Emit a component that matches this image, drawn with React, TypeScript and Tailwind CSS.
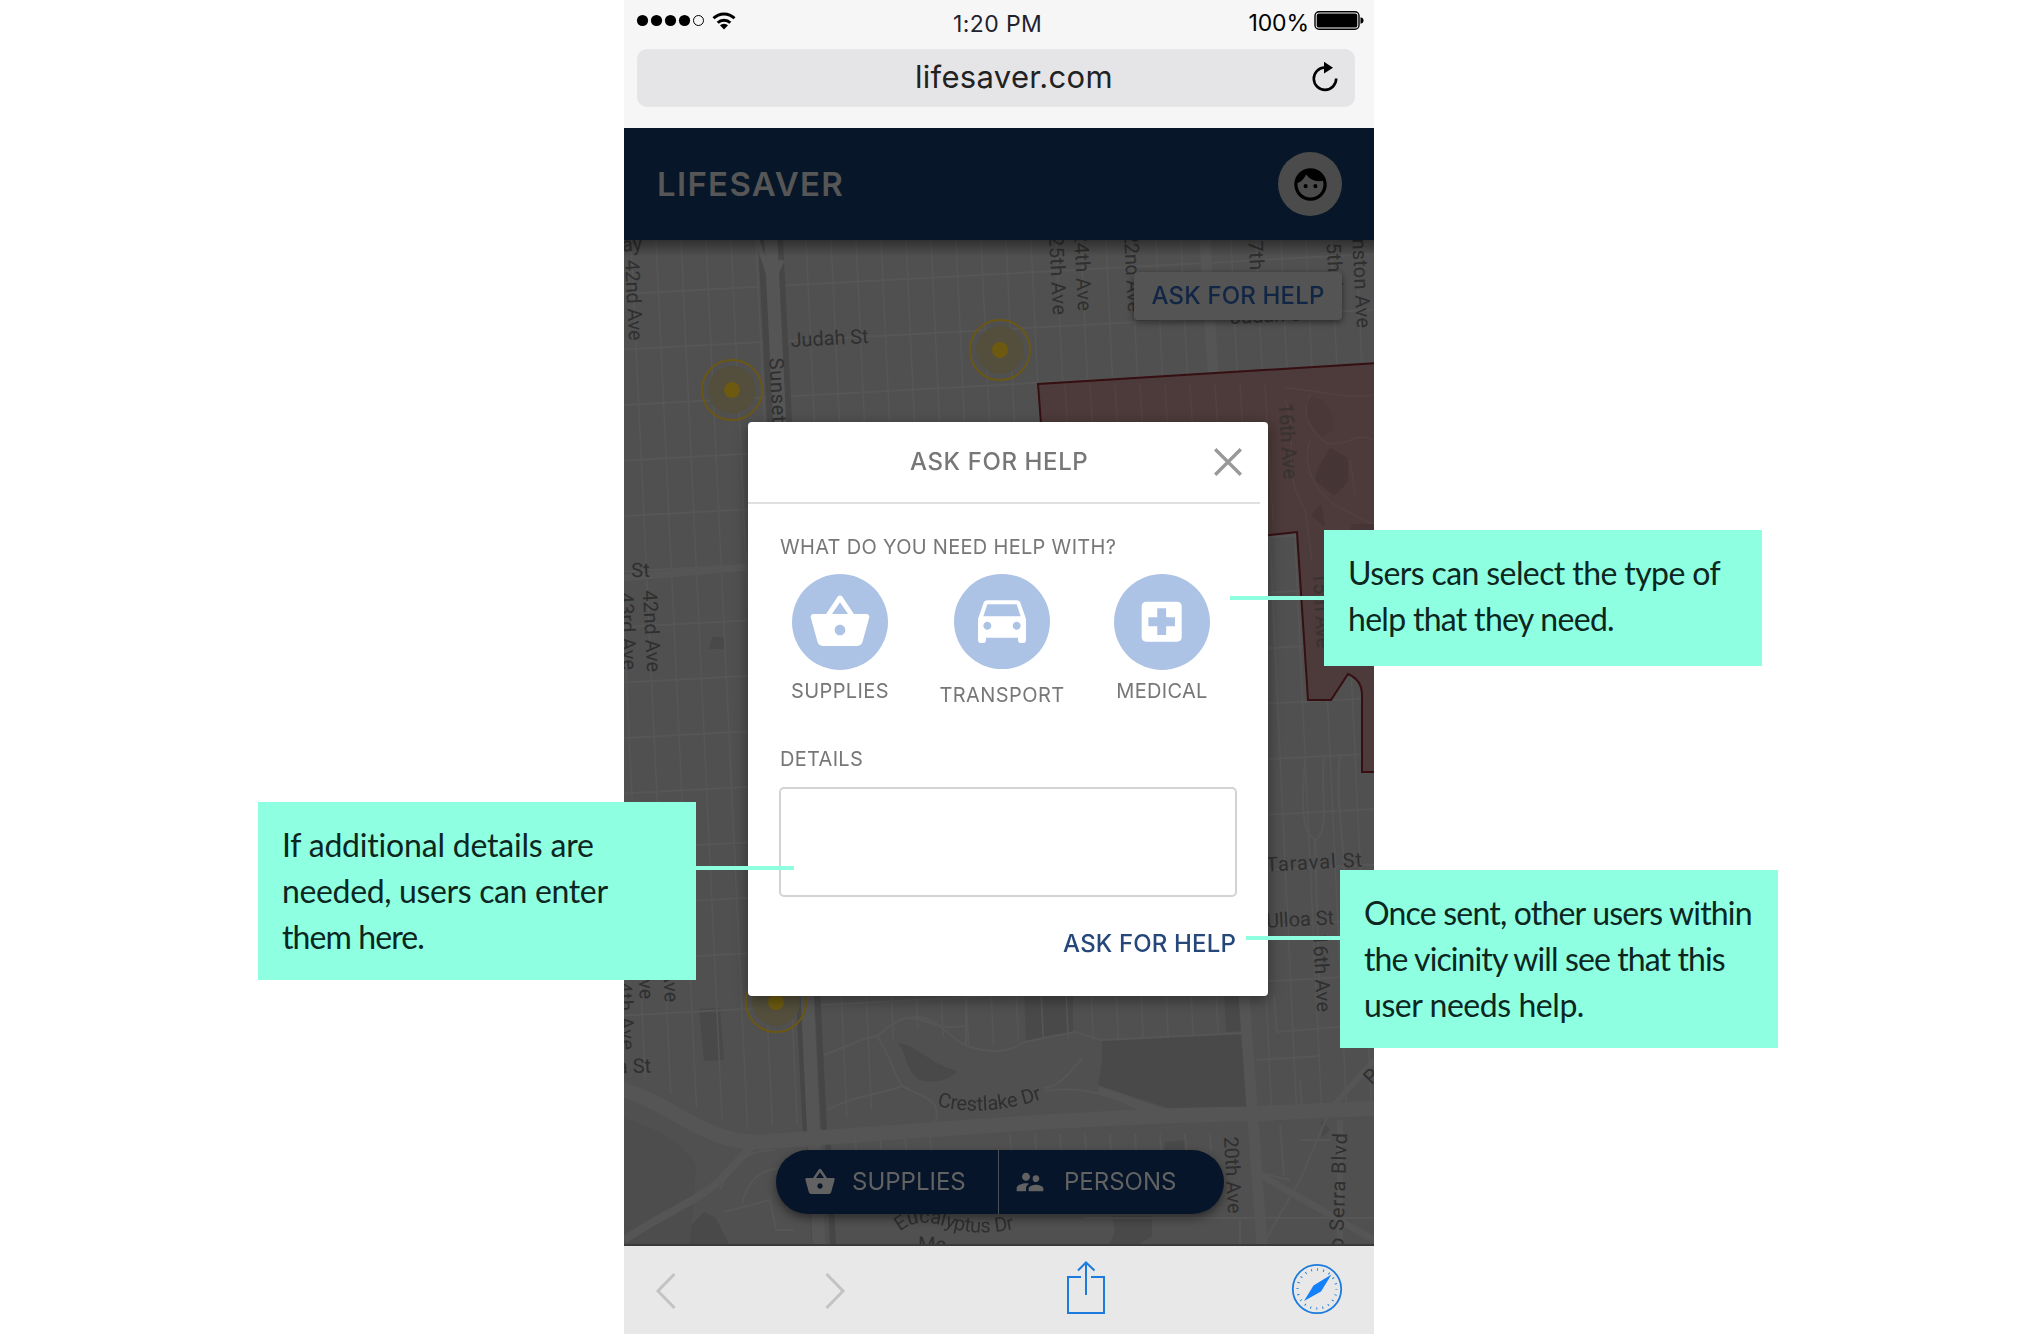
import React from "react";
import {
  MdDirectionsCar,
  MdFace,
  MdLocalHospital,
  MdShoppingBasket,
  MdSupervisorAccount,
} from "react-icons/md";

const avenues = Array.from({ length: 31 }, (_, i) => 606 + i * 25);
const streets = Array.from({ length: 14 }, (_, i) => 294 + i * 55.5);

type LabelProps = { x: number; y: number; r: number; len?: number; size?: number; children: string };

function Label({ x, y, r, len, size = 20, children }: LabelProps) {
  return (
    <text
      x={x}
      y={y}
      textAnchor="middle"
      dominantBaseline="central"
      transform={`rotate(${r} ${x} ${y})`}
      textLength={len}
      fontSize={size}
    >
      {children}
    </text>
  );
}

function Beacon({ x, y }: { x: number; y: number }) {
  return (
    <g>
      <circle cx={x} cy={y} r="24" fill="#534f3c" />
      <circle cx={x} cy={y} r="30" fill="none" stroke="#6b5714" strokeWidth="2" />
      <circle cx={x} cy={y} r="8" fill="#6d5a10" />
    </g>
  );
}

function StreetMap() {
  return (
    <svg viewBox="624 240 750 1006" className="block h-[1006px] w-[750px] bg-[#505050]">
      <defs>
        <clipPath id="grid">
          <path d="M624 240H1374V1108L1250 1108L1245 1034L1102 1040L1030 1038L975 1050L900 1020L870 1115L740 1130L624 1070Z" />
        </clipPath>
        <linearGradient id="headerShade" x1="0" y1="0" x2="0" y2="1">
          <stop offset="0" stopColor="#000" stopOpacity=".4" />
          <stop offset="1" stopColor="#000" stopOpacity="0" />
        </linearGradient>
        <path id="crestlake" d="M937 1106 Q990 1119 1050 1096" />
        <path id="eucalyptus" d="M900 1232 Q917 1216 950 1228 Q982 1237 1018 1228" />
      </defs>

      {/* parks and blocks */}
      <g fill="#494949">
        <path d="M1102 1040L1245 1033L1248 1109L1177 1111L1098 1085L1102 1062Z" />
        <path d="M1024 990H1073V1032L1050 1035L1026 1042Z" />
        <path d="M1224 990H1243L1245 1031L1226 1032Z" />
        <path d="M699 1009L720 1008L724 1060L704 1061Z" />
        <path d="M898 1043C920 1047 930 1064 957 1071C952 1080 932 1084 920 1080C905 1070 908 1056 898 1043Z" />
        <path d="M704 1212L716 1218L730 1246H672Z" />
        <path d="M1112 1216H1152V1236L1136 1246H1108L1115 1232Z" />
        <path d="M1165 1142L1186 1140V1152H1164Z" />
        <path d="M1321 1120L1330 1130L1322 1138Z" />
        <path d="M712 637h12v12h-15z" />
      </g>
      <path d="M624 1118C650 1126 690 1146 696 1166L690 1246H624Z" fill="#4d4d4d" />

      {/* street grid */}
      <g stroke="#565656" strokeWidth="1.6" clipPath="url(#grid)">
        {avenues.map((x) => (
          <path key={x} d={`M${x} 240L${x + 42} 1140`} />
        ))}
        {streets.map((y) => (
          <path key={y} d={`M624 ${y}L1374 ${y - 40}`} strokeWidth="2" />
        ))}
      </g>
      <path d="M624 578L760 566" stroke="#555" strokeWidth="7" />

      {/* boulevards */}
      <g fill="none">
        <path d="M761 240L806 1136M810 1142L815 1246" stroke="#464646" strokeWidth="6" />
        <path d="M780 240L824 1130M828 1142L833 1246" stroke="#464646" strokeWidth="6" />
        <path d="M771 240L819 1246" stroke="#555" strokeWidth="13" />
        <path d="M757 240L772 284L782 260" stroke="#555" strokeWidth="5" />
        <path d="M1205 240L1216 422M1244 996L1262 1246" stroke="#555" strokeWidth="11" />
        <path d="M618 1088C670 1102 705 1144 760 1142C880 1134 1100 1115 1247 1114L1380 1108" stroke="#555" strokeWidth="15" />
        <path d="M1098 1090C1130 1100 1150 1110 1178 1116" stroke="#555" strokeWidth="8" />
        <path d="M624 1240C660 1215 700 1200 720 1180L752 1146" stroke="#555" strokeWidth="8" />
        <path d="M1374 1060L1330 1110M1340 1120V1246" stroke="#555" strokeWidth="6" />
        <path d="M1330 1110L1300 1180L1262 1246" stroke="#555" strokeWidth="2.500" />
        <path d="M1262 1176L1374 1240" stroke="#555" strokeWidth="7" />
      </g>
      <g fill="none" stroke="#565656" strokeWidth="2">
        <path d="M824 1055C840 1050 860 1038 877 1036C890 1025 900 1018 910 1018C935 1020 930 1030 966 1026M877 1036C890 1055 893 1072 902 1086C930 1100 940 1100 936 1122M902 1086C880 1095 850 1096 828 1110" />
        <path d="M910 1018C940 1012 950 1045 975 1048C995 1054 1010 1052 1024 1042L1075 1032L1102 1040M966 996V1045" />
        <path d="M1044 1088C1060 1088 1070 1070 1083 1058M1045 1091C1080 1085 1110 1095 1145 1112" />
        <path d="M1102 1040L1245 1033M1274 996L1277 1032L1374 1024M1256 1060L1320 1056" />
        <path d="M720 1190C730 1160 750 1150 775 1150M742 1204C748 1180 760 1170 780 1168M724 1212L770 1200L776 1230L794 1230" />
        {[855, 880, 905, 930, 1010, 1035, 1060, 1085, 1110, 1135, 1160, 1185, 1210].map((x) => (
          <path key={x} d={`M${x} 1134L${x + 1} 1150`} />
        ))}
        <path d="M1085 1218H1374M1240 1218V1246M1256 1172L1290 1180M1300 1140H1330M1280 1125L1284 1175M1300 1080L1302 1108" />
        <path d="M1305 760C1300 820 1305 835 1316 840C1330 830 1320 790 1324 755M1315 840L1320 1010M1340 755C1335 800 1345 850 1344 870" />
      </g>

      {/* closed zone */}
      <path
        d="M1038 384L1378 363V772H1362V692Q1360 678 1348 674L1331 700H1308L1297 532L1048 552Z"
        fill="#4d3a3a"
      />
      <g stroke="#534141" strokeWidth="1.5" fill="none">
        {[1065, 1090, 1115, 1140, 1165, 1190, 1215, 1240, 1265].map((x) => (
          <path key={x} d={`M${x} 384L${x + 8} 520`} />
        ))}
        <path d="M1285 388C1320 390 1345 400 1374 395M1310 395C1300 415 1310 430 1325 442C1345 450 1355 430 1374 440M1285 400C1300 440 1280 470 1305 510L1312 560M1310 440C1300 470 1320 500 1345 510L1374 525M1350 460L1355 495" />
      </g>
      <g fill="#463535">
        <path d="M1330 448L1348 458V482L1334 496L1315 480L1318 468Z" />
        <path d="M1321 504L1325 527L1311 515Z" />
        <path d="M1306 400C1320 390 1335 410 1334 430L1322 438L1308 420Z" opacity=".3" />
        <path d="M1352 524H1374V532H1350Z" />
      </g>
      <path
        d="M1041 424L1038 384L1378 363M1262 536L1297 532L1308 700H1331L1348 674Q1362 680 1362 695V772H1378"
        fill="none"
        stroke="#350f12"
        strokeWidth="2"
      />

      <g fill="#2f2f2f" className="font-['Roboto']">
        <Label x={632} y={244} r={-3}>ay</Label>
        <Label x={634} y={300} r={87} len={81}>42nd Ave</Label>
        <Label x={829.5} y={338} r={-3} len={78}>Judah St</Label>
        <Label x={778} y={390} r={87} len={65}>Sunset</Label>
        <Label x={1058} y={275} r={87} len={80}>25th Ave</Label>
        <Label x={1083} y={271} r={87} len={80}>24th Ave</Label>
        <Label x={1133} y={272} r={87} len={80}>22nd Ave</Label>
        <Label x={1257} y={269} r={87} len={80}>17th Ave</Label>
        <Label x={1335} y={271} r={87} len={80}>15th Ave</Label>
        <Label x={1361} y={272} r={87} len={112}>Funston Ave</Label>
        <Label x={1269} y={315} r={-3} len={78}>Judah St</Label>
        <g opacity=".75">
          <Label x={1288} y={441} r={86} len={76}>16th Ave</Label>
          <Label x={1322} y={610} r={87} len={76}>15th Ave</Label>
        </g>
        <Label x={640.5} y={570} r={-2}>St</Label>
        <Label x={652} y={631} r={87} len={82}>42nd Ave</Label>
        <Label x={628} y={631} r={87} len={78}>43rd Ave</Label>
        <Label x={1314} y={862} r={-3} len={96}>Taraval St</Label>
        <Label x={1300} y={919} r={-3} len={68}>Ulloa St</Label>
        <Label x={1322} y={973} r={87} len={78}>16th Ave</Label>
        <Label x={626} y={1010} r={87} len={80}>44th Ave</Label>
        <Label x={646} y={983} r={87}>Ave</Label>
        <Label x={671} y={986} r={87}>Ave</Label>
        <Label x={634} y={1066} r={-2}>a St</Label>
        <Label x={1233} y={1175} r={87} len={77}>20th Ave</Label>
        <Label x={1338} y={1191} r={-88} len={116}>o Serra Blvd</Label>
        <Label x={1371} y={1076} r={-45}>P</Label>
        <Label x={932} y={1244} r={2}>Me</Label>
        <text fontSize="20">
          <textPath href="#crestlake" textLength={107}>Crestlake Dr</textPath>
        </text>
        <text fontSize="20">
          <textPath href="#eucalyptus" textLength={118}>Eucalyptus Dr</textPath>
        </text>
      </g>

      <Beacon x={732} y={390} />
      <Beacon x={1000} y={350} />
      <Beacon x={776} y={1002} />
      <rect x="624" y="240" width="750" height="16" fill="url(#headerShade)" />
      <rect x="624" y="1244" width="750" height="2" fill="#3a3a3a" />
    </svg>
  );
}

function StatusBar() {
  return (
    <div className="relative flex h-[49px] items-start">
      <svg className="ml-[12px] mt-[8px] h-[26px] w-[104px]" viewBox="636 8 104 26">
        {[642.5, 656.5, 670.5, 684.5].map((x) => (
          <circle key={x} cx={x} cy="20.5" r="5.6" />
        ))}
        <circle cx="698.5" cy="20.5" r="5" fill="none" stroke="#000" />
        <g fill="none" stroke="#000" strokeWidth="3">
          <path d="M713.5 18.2a15 15 0 0 1 21 0" />
          <path d="M717.7 22.7a9 9 0 0 1 12.6 0" />
        </g>
        <path d="M724 29.5l-4-4.2a5.7 5.7 0 0 1 8 0z" />
      </svg>
      <span className="absolute left-[329px] top-[12px] text-[23px] leading-[24px] tracking-[0.4px] text-[#22222c]">1:20 PM</span>
      <div className="ml-auto mr-[10px] flex">
        <span className="mt-[11px] text-[23px] leading-[24px] tracking-[-0.1px] text-black">100%</span>
        <svg className="ml-[5px] mt-[10px] h-[21px] w-[50px]" viewBox="0 0 50 21">
          <rect x="1" y="1.7" width="44" height="17.6" rx="4" fill="none" stroke="#000" strokeWidth="1.4" />
          <rect x="2.7" y="3.4" width="40.6" height="14.2" rx="2.2" />
          <path d="M46.5 7.2q3 .6 3 3.3t-3 3.3z" />
        </svg>
      </div>
    </div>
  );
}

function AddressBar() {
  return (
    <div className="relative ml-[13px] flex h-[58px] w-[718px] items-center rounded-[10px] bg-[#e5e5e8]">
      <span className="mb-[2px] ml-[278px] text-[31px] tracking-[0.3px] text-[#222]">lifesaver.com</span>
      <svg className="absolute right-[15px] top-[12px] h-[32px] w-[30px]" viewBox="0 0 30 32">
        <path d="M14.5 6.5A11.2 11.2 0 1 0 26.2 17.6" fill="none" stroke="#000" strokeWidth="2.6" />
        <path d="M14 0.8L23 6.8L14 12.6Z" />
      </svg>
    </div>
  );
}

function HelpOption({ icon, label, className }: { icon: React.ReactNode; label: string; className: string }) {
  return (
    <div className="flex w-[124px] flex-col items-center">
      <div className="flex h-[96px] w-[96px] items-center justify-center rounded-full bg-[#acc3e6] text-white">{icon}</div>
      <span className={`whitespace-nowrap text-[20px] leading-[20px] text-[#777] ${className}`}>{label}</span>
    </div>
  );
}

function HelpDialog() {
  return (
    <div className="absolute left-[124px] top-[294px] h-[574px] w-[520px] rounded-[4px] bg-white shadow-[0_4px_14px_rgba(0,0,0,0.4)]">
      <div className="flex h-[80px] items-center pl-[162px]">
        <h2 className="text-[24px] font-medium leading-[24px] tracking-[0.6px] text-[#777]">ASK FOR HELP</h2>
        <svg className="ml-auto mr-[26px] h-[28px] w-[28px]" viewBox="0 0 28 28">
          <path d="M1.2 1.2L26.8 26.8M26.8 1.2L1.2 26.8" stroke="#999" strokeWidth="3.4" />
        </svg>
      </div>
      <div className="h-[2px] w-[512px] bg-[#e0e0e0]" />
      <div className="flex flex-col px-[30px] pt-[33px]">
        <p className="pl-[2px] text-[20px] leading-[20px] tracking-[0.3px] text-[#777]">WHAT DO YOU NEED HELP WITH?</p>
        <div className="mt-[17px] flex h-[131px]">
          <HelpOption icon={<MdShoppingBasket size={64} />} label="SUPPLIES" className="mt-[11px] tracking-[0.4px]" />
          <div className="w-[38px]" />
          <HelpOption icon={<MdDirectionsCar size={64} className="mb-[6px]" />} label="TRANSPORT" className="mt-[16px] tracking-[0.4px]" />
          <div className="w-[36px]" />
          <HelpOption icon={<MdLocalHospital size={53.4} />} label="MEDICAL" className="mt-[11px] tracking-[0.3px]" />
        </div>
        <p className="mt-[44px] pl-[2px] text-[20px] leading-[20px] tracking-[0.3px] text-[#777]">DETAILS</p>
        <div className="ml-[1px] mt-[18px] h-[110px] w-[458px] rounded-[5px] border-2 border-[#d3d3d3]" />
        <button className="mr-[2px] mt-[35px] self-end text-[24px] font-medium leading-[24px] tracking-[0.15px] text-[#26477a]">ASK FOR HELP</button>
      </div>
    </div>
  );
}

function FilterPill() {
  return (
    <div className="absolute left-[152px] top-[1022px] flex h-[64px] w-[448px] items-center rounded-full bg-[#061529] text-[24px] leading-[24px] text-[#626262] shadow-[0_4px_10px_rgba(0,0,0,0.45)]">
      <MdShoppingBasket size={32} className="ml-[28px]" />
      <span className="ml-[16px] w-[146px] tracking-[0px]">SUPPLIES</span>
      <div className="h-full w-[1px] bg-[#4a5058]" />
      <MdSupervisorAccount size={32} className="ml-[15px]" />
      <span className="ml-[18px] tracking-[0px]">PERSONS</span>
    </div>
  );
}

function BrowserToolbar() {
  return (
    <div className="flex h-[88px] items-start bg-[#e8e8e8]">
      <svg className="ml-[30px] mt-[26px] h-[38px] w-[24px]" viewBox="0 0 24 38" fill="none" stroke="#c3c3c3" strokeWidth="3">
        <path d="M20.5 2L4 19L20.5 36" />
      </svg>
      <svg className="ml-[145px] mt-[26px] h-[38px] w-[24px]" viewBox="0 0 24 38" fill="none" stroke="#c3c3c3" strokeWidth="3">
        <path d="M3.500 2L20 19L3.500 36" />
      </svg>
      <svg className="ml-[218px] mt-[14px] h-[56px] w-[42px]" viewBox="1065 1260 42 56" fill="none" stroke="#1c7bdc" strokeWidth="2">
        <path d="M1081 1277H1068V1313H1104V1277H1091M1086 1295V1263M1078 1270.500L1086 1262.500L1094.500 1270.500" />
      </svg>
      <svg className="ml-[184px] mt-[17px] h-[52px] w-[52px]" viewBox="-26 -26 52 52">
        <circle r="24.200" fill="none" stroke="#1c7bdc" strokeWidth="1.800" />
        <circle r="19.500" fill="none" stroke="#1c7bdc" strokeWidth="2.400" strokeDasharray="0.900 5.226" strokeDashoffset="0.450" />
        <path d="M14.500 -14.500L4 2.500L-13 12L-3.500 -3.500Z" fill="#1480fa" />
      </svg>
    </div>
  );
}

function Callout({ lines, box, line }: { lines: { text: string; tracking: string }[]; box: string; line: string }) {
  return (
    <>
      <div className={`absolute h-[4px] bg-[#8effe0] ${line}`} />
      <div className={`absolute w-[438px] bg-[#8effe0] pl-[24px] pt-[20px] font-['Lato'] text-[32px] leading-[46px] text-[#0d2620] ${box}`}>
        {lines.map((l) => (
          <div key={l.text} className={`whitespace-nowrap ${l.tracking}`}>{l.text}</div>
        ))}
      </div>
    </>
  );
}

export default function App() {
  return (
    <div className="relative h-[1334px] w-[2034px] overflow-hidden bg-white font-['Inter',sans-serif]">
      <div className="relative ml-[624px] flex h-full w-[750px] flex-col">
        <div className="h-[128px] bg-[#f6f6f6]">
          <StatusBar />
          <AddressBar />
        </div>
        <header className="flex h-[112px] items-center justify-between bg-[#071628] pl-[33px] pr-[32px]">
          <h1 className="mt-[1px] text-[33px] font-semibold tracking-[1.3px] text-[#565656]">LIFESAVER</h1>
          <div className="flex h-[64px] w-[64px] items-center justify-center rounded-full bg-[#4b4b4b] text-black">
            <MdFace size={39} />
          </div>
        </header>
        <div className="relative h-[1006px] overflow-hidden">
          <StreetMap />
          <button className="absolute left-[510px] top-[32px] flex h-[48px] w-[208px] items-center justify-center rounded-[4px] bg-[#545454] text-[24px] font-medium tracking-[0.15px] text-[#112545] shadow-[0_2px_6px_rgba(0,0,0,0.5)]">
            ASK FOR HELP
          </button>
        </div>
        <div className="absolute left-0 top-[128px]">
          <HelpDialog />
          <FilterPill />
        </div>
        <BrowserToolbar />
      </div>

      <Callout
        box="left-[1324px] top-[530px] h-[136px]"
        line="left-[1230px] top-[596px] w-[94px]"
        lines={[
          { text: "Users can select the type of", tracking: "tracking-[-0.6px]" },
          { text: "help that they need.", tracking: "tracking-[-0.7px]" },
        ]}
      />
      <Callout
        box="left-[1340px] top-[870px] h-[178px]"
        line="left-[1246px] top-[936px] w-[94px]"
        lines={[
          { text: "Once sent, other users within", tracking: "tracking-[-0.8px]" },
          { text: "the vicinity will see that this", tracking: "tracking-[-0.9px]" },
          { text: "user needs help.", tracking: "tracking-[-0.45px]" },
        ]}
      />
      <Callout
        box="left-[258px] top-[802px] h-[178px]"
        line="left-[696px] top-[866px] w-[98px]"
        lines={[
          { text: "If additional details are", tracking: "tracking-[-0.2px]" },
          { text: "needed, users can enter", tracking: "tracking-[-0.35px]" },
          { text: "them here.", tracking: "tracking-[-0.9px]" },
        ]}
      />
    </div>
  );
}
